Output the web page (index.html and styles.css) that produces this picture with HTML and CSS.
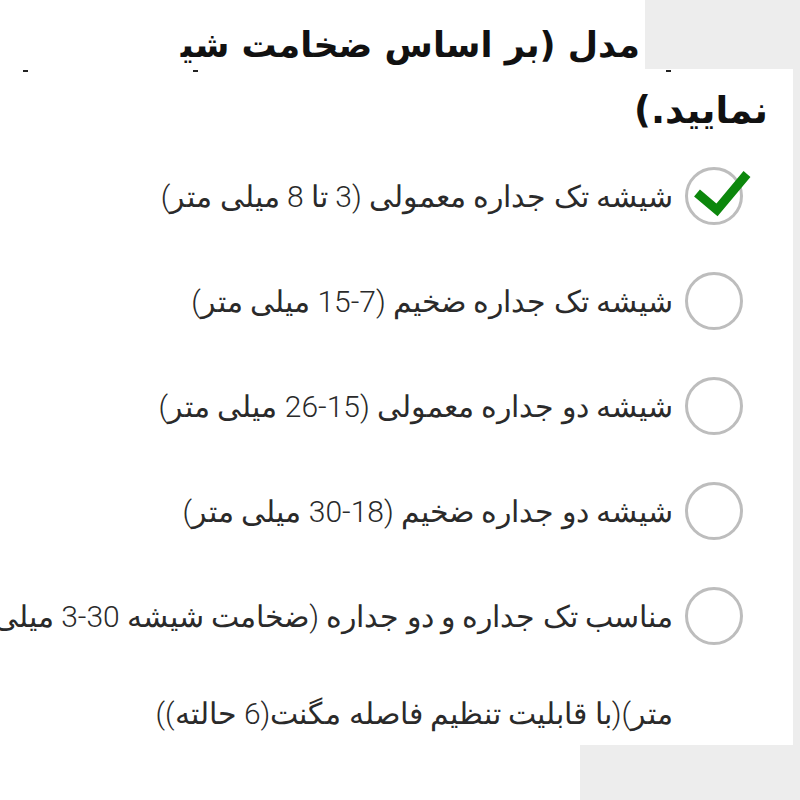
FILE: index.html
```html
<!DOCTYPE html>
<html lang="fa" dir="rtl">
    <head>
        <meta charset="utf-8">
        <link rel="stylesheet" href="styles.css">
    </head>
    <body>
        <div class="page">
            <div class="top">
                <div class="top-shade"></div>
                <h2 class="title-cut">مدل (بر اساس ضخامت شی&zwj;</h2>
            </div>

            <div class="sheet">
                <div class="ticks">
                    <span></span><span></span><span></span>
                </div>
                <h2 class="title-end">نمایید.)</h2>

                <ul class="options">
                    <li class="option">
                        <span class="radio checked">
                            <svg viewBox="0 0 70 60"><polyline points="12,26 32,43 62,7"></polyline></svg>
                        </span>
                        <span class="label">شیشه تک جداره معمولی (3 تا 8 میلی متر)</span>
                    </li>
                    <li class="option">
                        <span class="radio"></span>
                        <span class="label">شیشه تک جداره ضخیم (7-15 میلی متر)</span>
                    </li>
                    <li class="option">
                        <span class="radio"></span>
                        <span class="label">شیشه دو جداره معمولی (15-26 میلی متر)</span>
                    </li>
                    <li class="option">
                        <span class="radio"></span>
                        <span class="label">شیشه دو جداره ضخیم (18-30 میلی متر)</span>
                    </li>
                    <li class="option">
                        <span class="radio"></span>
                        <span class="label">مناسب تک جداره و دو جداره (ضخامت شیشه 30-3 میلی<br>متر)(با قابلیت تنظیم فاصله مگنت(6 حالته))</span>
                    </li>
                </ul>
            </div>

            <div class="bottom">
                <div class="bottom-shade"></div>
            </div>
        </div>
    </body>
</html>
```

FILE: styles.css
```css
/* BASE */
* {
    box-sizing: border-box;
}
body {
    margin: 0;
    background: white;
    font-family: Roboto, "DejaVu Sans", sans-serif;
    color: #222;
}
.page {
    width: 800px;
    height: 800px;
    overflow: hidden;
}

/* TOP (cut heading) */
.top {
    display: flex;
    height: 69px;
    overflow: hidden;
}
.top-shade {
    flex: 0 0 155px;
    background: #ededed;
}
.title-cut {
    margin: 0 5px 0 0;
    padding-top: 24px;
    font-family: "DejaVu Sans", sans-serif;
    font-size: 35px;
    font-weight: bold;
    line-height: 1.2;
    white-space: nowrap;
    color: #111;
}

/* SHEET */
.sheet {
    height: 676px;
    border-right: 7px solid #ededed;
    overflow: hidden;
}
.ticks {
    display: flex;
    direction: ltr;
    height: 4px;
    padding-top: 1px;
}
.ticks span {
    width: 5px;
    height: 2px;
    background: #222;
}
.ticks span:nth-child(1) {
    margin-left: 23px;
}
.ticks span:nth-child(2) {
    margin-left: 165px;
}
.ticks span:nth-child(3) {
    margin-left: 468px;
}
.title-end {
    margin: 0;
    padding-right: 25px;
    font-family: "DejaVu Sans", sans-serif;
    font-size: 37px;
    font-weight: bold;
    line-height: 75px;
    color: #111;
}

/* OPTIONS */
.options {
    list-style: none;
    margin: 0;
    padding: 0 50px 0 0;
}
.option {
    display: flex;
    align-items: flex-start;
    gap: 12px;
    margin-bottom: 8px;
}
.radio {
    position: relative;
    flex: 0 0 58px;
    height: 58px;
    margin-top: 19px;
    border: 3px solid #bdbdbd;
    border-radius: 50%;
}
.radio svg {
    position: absolute;
    top: -3px;
    left: -3px;
    width: 70px;
    height: 60px;
    overflow: visible;
}
.radio polyline {
    fill: none;
    stroke: #0c870c;
    stroke-width: 9;
    stroke-linejoin: miter;
}
.label {
    font-size: 30px;
    font-weight: 300;
    line-height: 97px;
    white-space: nowrap;
    color: #2a2a2a;
}

/* BOTTOM */
.bottom {
    display: flex;
    height: 55px;
}
.bottom-shade {
    flex: 0 0 220px;
    background: #ededed;
}
```
